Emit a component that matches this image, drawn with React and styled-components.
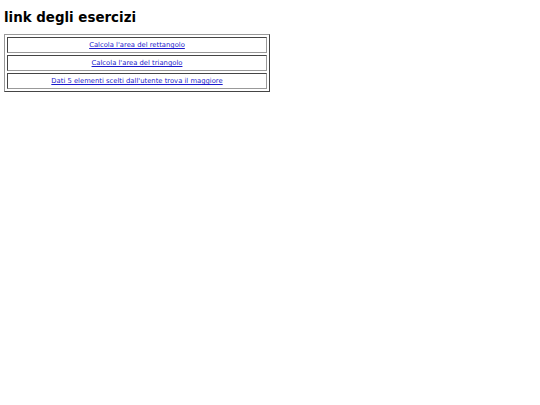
import React from 'react';
import styled, { createGlobalStyle } from 'styled-components';

const GlobalStyle = createGlobalStyle`
    body {
        margin: 4px;
        background: #fff;
        font-family: "DejaVu Sans", Verdana, sans-serif;
    }
`;

const Title = styled.h1`
    font-size: 13.4px;
    font-weight: 700;
    margin: 6px 0 9px;
    color: #000;
`;

const LinkTable = styled.table`
    width: 266px;
    border: 1px outset #999;
    border-spacing: 2px;
`;

const Cell = styled.td`
    border: 1px inset #999;
    text-align: center;
    height: 12px;
    padding: 1px;
    font-size: 6.8px;
`;

const ExLink = styled.a`
    color: #1a1acc;
    text-decoration: underline;
`;

const links = [
    'Calcola l\'area del rettangolo',
    'Calcola l\'area del triangolo',
    'Dati 5 elementi scelti dall\'utente trova il maggiore',
];

export default function App() {
    return (
        <>
            <GlobalStyle />
            <Title>link degli esercizi</Title>
            <LinkTable>
                <tbody>
                    {links.map((text) => (
                        <tr key={text}>
                            <Cell>
                                <ExLink href="#">{text}</ExLink>
                            </Cell>
                        </tr>
                    ))}
                </tbody>
            </LinkTable>
        </>
    );
}
